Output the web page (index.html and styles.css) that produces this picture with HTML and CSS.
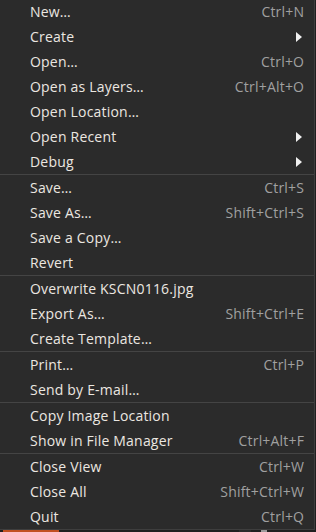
FILE: index.html
```html
<!DOCTYPE html>
<html>
<head>
<meta charset="utf-8">
<link rel="stylesheet" href="styles.css">
</head>
<body>
<div class="menu">
  <div class="item"><span class="label">New…</span><span class="accel">Ctrl+N</span></div>
  <div class="item"><span class="label">Create</span><span class="arrow"></span></div>
  <div class="item"><span class="label">Open…</span><span class="accel">Ctrl+O</span></div>
  <div class="item"><span class="label">Open as Layers…</span><span class="accel">Ctrl+Alt+O</span></div>
  <div class="item"><span class="label">Open Location…</span></div>
  <div class="item"><span class="label">Open Recent</span><span class="arrow"></span></div>
  <div class="item"><span class="label">Debug</span><span class="arrow"></span></div>
  <div class="sep"></div>
  <div class="item"><span class="label">Save…</span><span class="accel">Ctrl+S</span></div>
  <div class="item"><span class="label">Save As…</span><span class="accel">Shift+Ctrl+S</span></div>
  <div class="item"><span class="label">Save a Copy…</span></div>
  <div class="item"><span class="label">Revert</span></div>
  <div class="sep"></div>
  <div class="item"><span class="label">Overwrite KSCN0116.jpg</span></div>
  <div class="item"><span class="label">Export As…</span><span class="accel">Shift+Ctrl+E</span></div>
  <div class="item"><span class="label">Create Template…</span></div>
  <div class="sep"></div>
  <div class="item"><span class="label">Print…</span><span class="accel">Ctrl+P</span></div>
  <div class="item"><span class="label">Send by E-mail…</span></div>
  <div class="sep"></div>
  <div class="item"><span class="label">Copy Image Location</span></div>
  <div class="item"><span class="label">Show in File Manager</span><span class="accel">Ctrl+Alt+F</span></div>
  <div class="sep"></div>
  <div class="item"><span class="label">Close View</span><span class="accel">Ctrl+W</span></div>
  <div class="item"><span class="label">Close All</span><span class="accel">Shift+Ctrl+W</span></div>
  <div class="item"><span class="label">Quit</span><span class="accel">Ctrl+Q</span></div>
</div>
<div class="under">
  <div class="tab-active"></div>
  <div class="gap1"></div>
  <div class="blk"></div>
  <div class="gap2"></div>
  <div class="blk light"></div>
</div>
</body>
</html>
```
FILE: styles.css
```css
html, body {
  margin: 0;
  padding: 0;
  background: #1f1f1f;
  overflow: hidden;
}
.menu {
  width: 314px;
  margin-top: -1px;
  background: #2b2b2b;
  border-right: 1px solid #3e3e3e;
  border-bottom: 1px solid #3e3e3e;
  font-family: "Open Sans", "DejaVu Sans", sans-serif;
  font-size: 14px;
  letter-spacing: 0.2px;
  color: #ebe7e1;
}
.item {
  height: 25px;
  display: flex;
  align-items: center;
  padding: 0 10px 0 30px;
}
.label {
  flex: 1;
  white-space: nowrap;
}
.accel {
  color: #a0a0a0;
  white-space: nowrap;
  margin-right: -0.2px;
}
.arrow {
  width: 0;
  height: 0;
  margin-right: 2px;
  border-top: 5px solid transparent;
  border-bottom: 5px solid transparent;
  border-left: 6px solid #f0f0f0;
}
.sep {
  height: 1px;
  background: #444444;
}
.under {
  display: flex;
  height: 3px;
  padding-left: 3px;
}
.tab-active {
  width: 56px;
  background: #c24f22;
}
.gap1 { width: 180px; }
.blk { width: 12px; background: #2a2a2a; }
.gap2 { width: 10px; }
.blk.light { width: 6px; background: #9a9a9a; }
```
